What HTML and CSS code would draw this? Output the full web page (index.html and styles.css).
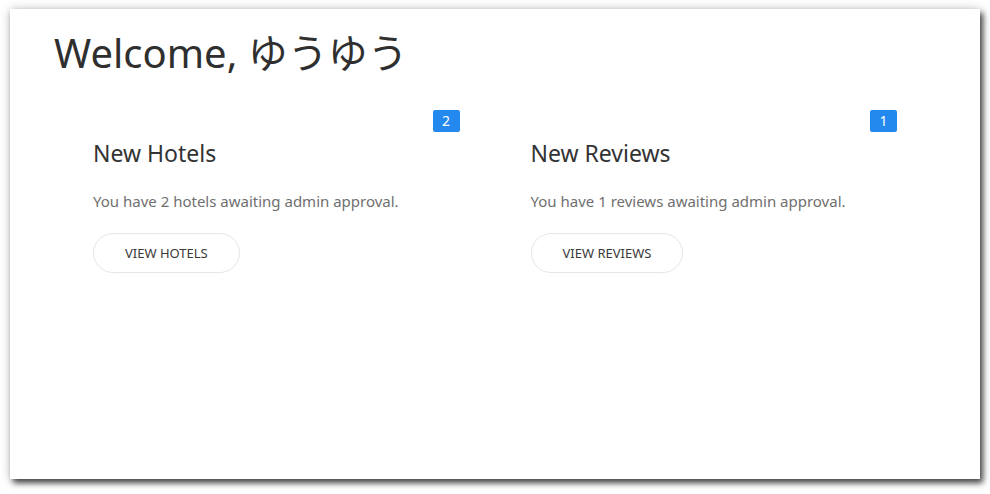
FILE: index.html
```html
<!DOCTYPE html>
<html lang="ja">
<head>
<meta charset="utf-8">
<title>Dashboard</title>
<link rel="stylesheet" href="styles.css">
</head>
<body>
<div class="window">
  <h1 class="title">Welcome, ゆうゆう</h1>
  <div class="cards">
    <div class="card">
      <span class="badge">2</span>
      <h2 class="card-title">New Hotels</h2>
      <p class="card-text">You have 2 hotels awaiting admin approval.</p>
      <a class="btn" href="#">VIEW HOTELS</a>
    </div>
    <div class="card">
      <span class="badge">1</span>
      <h2 class="card-title">New Reviews</h2>
      <p class="card-text">You have 1 reviews awaiting admin approval.</p>
      <a class="btn" href="#">VIEW REVIEWS</a>
    </div>
  </div>
</div>
</body>
</html>
```
FILE: styles.css
```css
html, body {
  margin: 0;
  padding: 0;
  background: #ffffff;
}
body {
  font-family: "Noto Sans", "Noto Sans CJK JP", sans-serif;
  color: #333333;
  min-height: 494px;
  padding-top: 9px;
  box-sizing: border-box;
}
.window {
  box-sizing: border-box;
  margin: 0 10px;
  width: 970px;
  height: 470px;
  background: #ffffff;
  box-shadow: 3px 4px 6px rgba(0, 0, 0, 0.7), 0 0 10px rgba(0, 0, 0, 0.2);
  padding: 20px 44px 0 44px;
}
.title {
  margin: 0;
  font-size: 40px;
  font-weight: 400;
  line-height: 48px;
  color: #2f2f2f;
}
.cards {
  display: flex;
  gap: 23px;
  margin: 33px 15px 0 15px;
}
.card {
  position: relative;
  flex: 1;
  padding: 28px 24px 24px 24px;
}
.badge {
  position: absolute;
  top: 0;
  right: 24px;
  width: 27px;
  height: 22px;
  line-height: 22px;
  text-align: center;
  background: #2389ee;
  color: #ffffff;
  font-size: 14px;
  border-radius: 2px;
}
.card-title {
  margin: 0 0 21px 0;
  font-size: 23px;
  font-weight: 400;
  line-height: 30px;
  color: #333333;
}
.card-text {
  margin: 0 0 20px 0;
  font-size: 15px;
  line-height: 24px;
  color: #6f6f6f;
}
.btn {
  display: inline-block;
  box-sizing: border-box;
  height: 40px;
  line-height: 38px;
  padding: 0 31px;
  border: 1px solid #e6e6e6;
  border-radius: 20px;
  font-size: 13px;
  color: #3a3a3a;
  text-decoration: none;
}
```
